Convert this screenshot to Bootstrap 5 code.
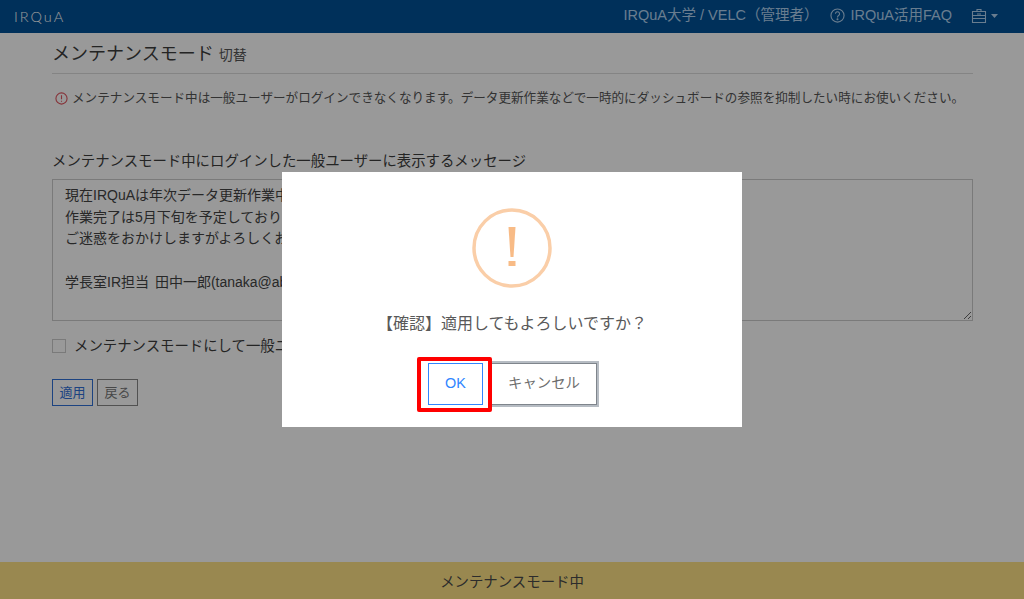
<!DOCTYPE html>
<html lang="ja">
<head>
    <meta charset="UTF-8">
    <title>メンテナンスモード</title>
    <link href="https://cdn.jsdelivr.net/npm/bootstrap@5.3.0/dist/css/bootstrap.min.css" rel="stylesheet">
    <style>
        html, body { height: 100%; }
        body { font-family: "Liberation Sans", "Noto Sans CJK JP", sans-serif; color: #3c3c3c; overflow: hidden; font-size: 14px; }
        .app-nav { background: #005096; height: 33px; padding: 0 26px 0 14px; }
        .app-brand { color: #fff; font-family: Lato, sans-serif; font-weight: 300; font-size: 14.5px; letter-spacing: 2px; }
        .app-nav-links { padding-bottom: 2px; }
        .app-nav-item { color: #b0d0ee; font-size: 14.5px; text-decoration: none; }
        .nav-gap-a { margin-left: 12px; }
        .nav-gap-b { margin-left: 19px; }
        .nav-q-icon { margin-right: 5px; }
        .app-body { padding: 8px 51px 0 52px; }
        .page-head { font-size: 18px; line-height: 26px; padding-bottom: 5px; border-bottom: 1px solid #ddd; margin-bottom: 14px; }
        .page-head small { font-size: 14px; color: #555; }
        .notice { font-size: 12.6px; line-height: 20px; color: #555; margin-bottom: 43px; white-space: nowrap; }
        .notice-icon { margin: 0 4px 0 3px; }
        .field-label { font-size: 14.4px; line-height: 20px; margin-bottom: 8px; display: block; }
        .msg-area { height: 142px; border-radius: 0; border-color: #ccc; padding: 5px 12px; font-size: 14px; line-height: 21.7px; color: #444; word-spacing: 2px; }
        .check-row { margin: 15px 0 23px; font-size: 14.4px; line-height: 20px; }
        .form-check-input.check-box { width: 14px; height: 14px; margin: 0; border-radius: 0; border-color: #ccc; }
        .btn-apply, .btn-back { font-size: 13px; line-height: 18px; padding: 4px 0; border-radius: 0; width: 41px; height: 27px; }
        .btn-apply { border: 1px solid #2f70d8; color: #2f70d8; }
        .btn-back { border: 1px solid #888; color: #777; }
        .app-foot { background: #ffe385; height: 37px; font-size: 14.4px; line-height: 37px; padding-top: 2px; color: #4a4a4a; }
        .dim-layer { position: fixed; inset: 0; background: rgba(0, 0, 0, .4); }
        .confirm-box { width: 460px; height: 255px; background: #fff; margin: 172px 0 0 282px; padding-top: 36px; }
        .confirm-text { font-size: 16px; line-height: 24px; color: #595959; margin: 24px 0 27px; }
        .confirm-actions { padding-left: 1px; }
        .btn-ok, .btn-cancel { border-radius: 0; font-size: 14.4px; height: 42px; background: #fff; padding: 0; }
        .btn-ok { width: 55px; border: 1px solid #3085ff; color: #3085ff; position: relative; }
        .btn-cancel { width: 106px; border: 1px solid #7f858c; outline: 2px solid #b6bcc3; color: #6e6e6e; margin-left: 8px; }
        .red-frame { position: absolute; left: -12px; top: -7px; width: 75px; height: 55px; border: 4px solid #f00; border-radius: 2px; z-index: 1; }
    </style>
</head>
<body class="d-flex flex-column">

    <nav class="navbar app-nav flex-nowrap">
        <span class="app-brand">IRQuA</span>
        <div class="app-nav-links d-flex align-items-center">
            <a href="#" class="app-nav-item">IRQuA大学 / VELC（管理者）</a>
            <a href="#" class="app-nav-item d-flex align-items-center nav-gap-a">
                <svg width="15" height="15" viewBox="0 0 16 16" class="nav-q-icon" fill="none" stroke="currentColor" stroke-width="1.2"><circle cx="8" cy="8" r="7"/><path d="M5.8 6.2a2.2 2.2 0 1 1 3.4 1.9C8.4 8.6 8 9 8 10"/><circle cx="8" cy="12" r=".5" fill="currentColor"/></svg>
                IRQuA活用FAQ
            </a>
            <a href="#" class="app-nav-item d-flex align-items-center nav-gap-b">
                <svg width="16" height="16" viewBox="0 0 16 16" fill="none" stroke="currentColor" stroke-width="1.1"><path d="M6 3V1.5h4V3M1.5 3.5h13v11h-13zM1.5 7.5h13M1.5 10.5h13M6 6h4"/></svg>
                <svg width="7" height="4" viewBox="0 0 7 4" class="ms-1" fill="currentColor"><path d="M0 0h7L3.5 4z"/></svg>
            </a>
        </div>
    </nav>

    <main class="app-body flex-grow-1">
        <h1 class="page-head fw-normal">メンテナンスモード <small>切替</small></h1>
        <p class="notice d-flex align-items-center">
            <svg width="13" height="13" viewBox="0 0 14 14" class="notice-icon flex-shrink-0" fill="none" stroke="#e05560" stroke-width="1.2"><circle cx="7" cy="7" r="6"/><path d="M7 3.5v4.2M7 9.4v1.2"/></svg>
            <span>メンテナンスモード中は一般ユーザーがログインできなくなります。データ更新作業などで一時的にダッシュボードの参照を抑制したい時にお使いください。</span>
        </p>
        <label class="field-label" for="msg">メンテナンスモード中にログインした一般ユーザーに表示するメッセージ</label>
        <textarea id="msg" class="form-control msg-area">現在IRQuAは年次データ更新作業中です。
作業完了は5月下旬を予定しております。
ご迷惑をおかけしますがよろしくお願いします。

学長室IR担当 田中一郎(tanaka@abc.ac.jp)</textarea>
        <div class="check-row d-flex align-items-center gap-2">
            <input type="checkbox" class="form-check-input check-box" id="mode">
            <label for="mode">メンテナンスモードにして一般ユーザーのログインを制限する</label>
        </div>
        <div class="d-flex gap-1">
            <button type="button" class="btn btn-apply">適用</button>
            <button type="button" class="btn btn-back">戻る</button>
        </div>
    </main>

    <footer class="app-foot text-center">メンテナンスモード中</footer>

    <div class="dim-layer">
        <div class="confirm-box text-center">
            <svg width="80" height="80" viewBox="0 0 80 80" class="d-block mx-auto" fill="none"><circle cx="40" cy="40" r="38" stroke="#facea8" stroke-width="3.5"/><path d="M36.5 19h7l-2 30h-3z" fill="#f8bb86"/><rect x="36.5" y="53" width="7" height="5" fill="#f8bb86"/></svg>
            <p class="confirm-text">【確認】適用してもよろしいですか？</p>
            <div class="confirm-actions d-flex justify-content-center">
                <button type="button" class="btn btn-ok">OK<span class="red-frame"></span></button>
                <button type="button" class="btn btn-cancel">キャンセル</button>
            </div>
        </div>
    </div>

    <script src="https://cdn.jsdelivr.net/npm/bootstrap@5.3.0/dist/js/bootstrap.bundle.min.js"></script>
</body>
</html>
